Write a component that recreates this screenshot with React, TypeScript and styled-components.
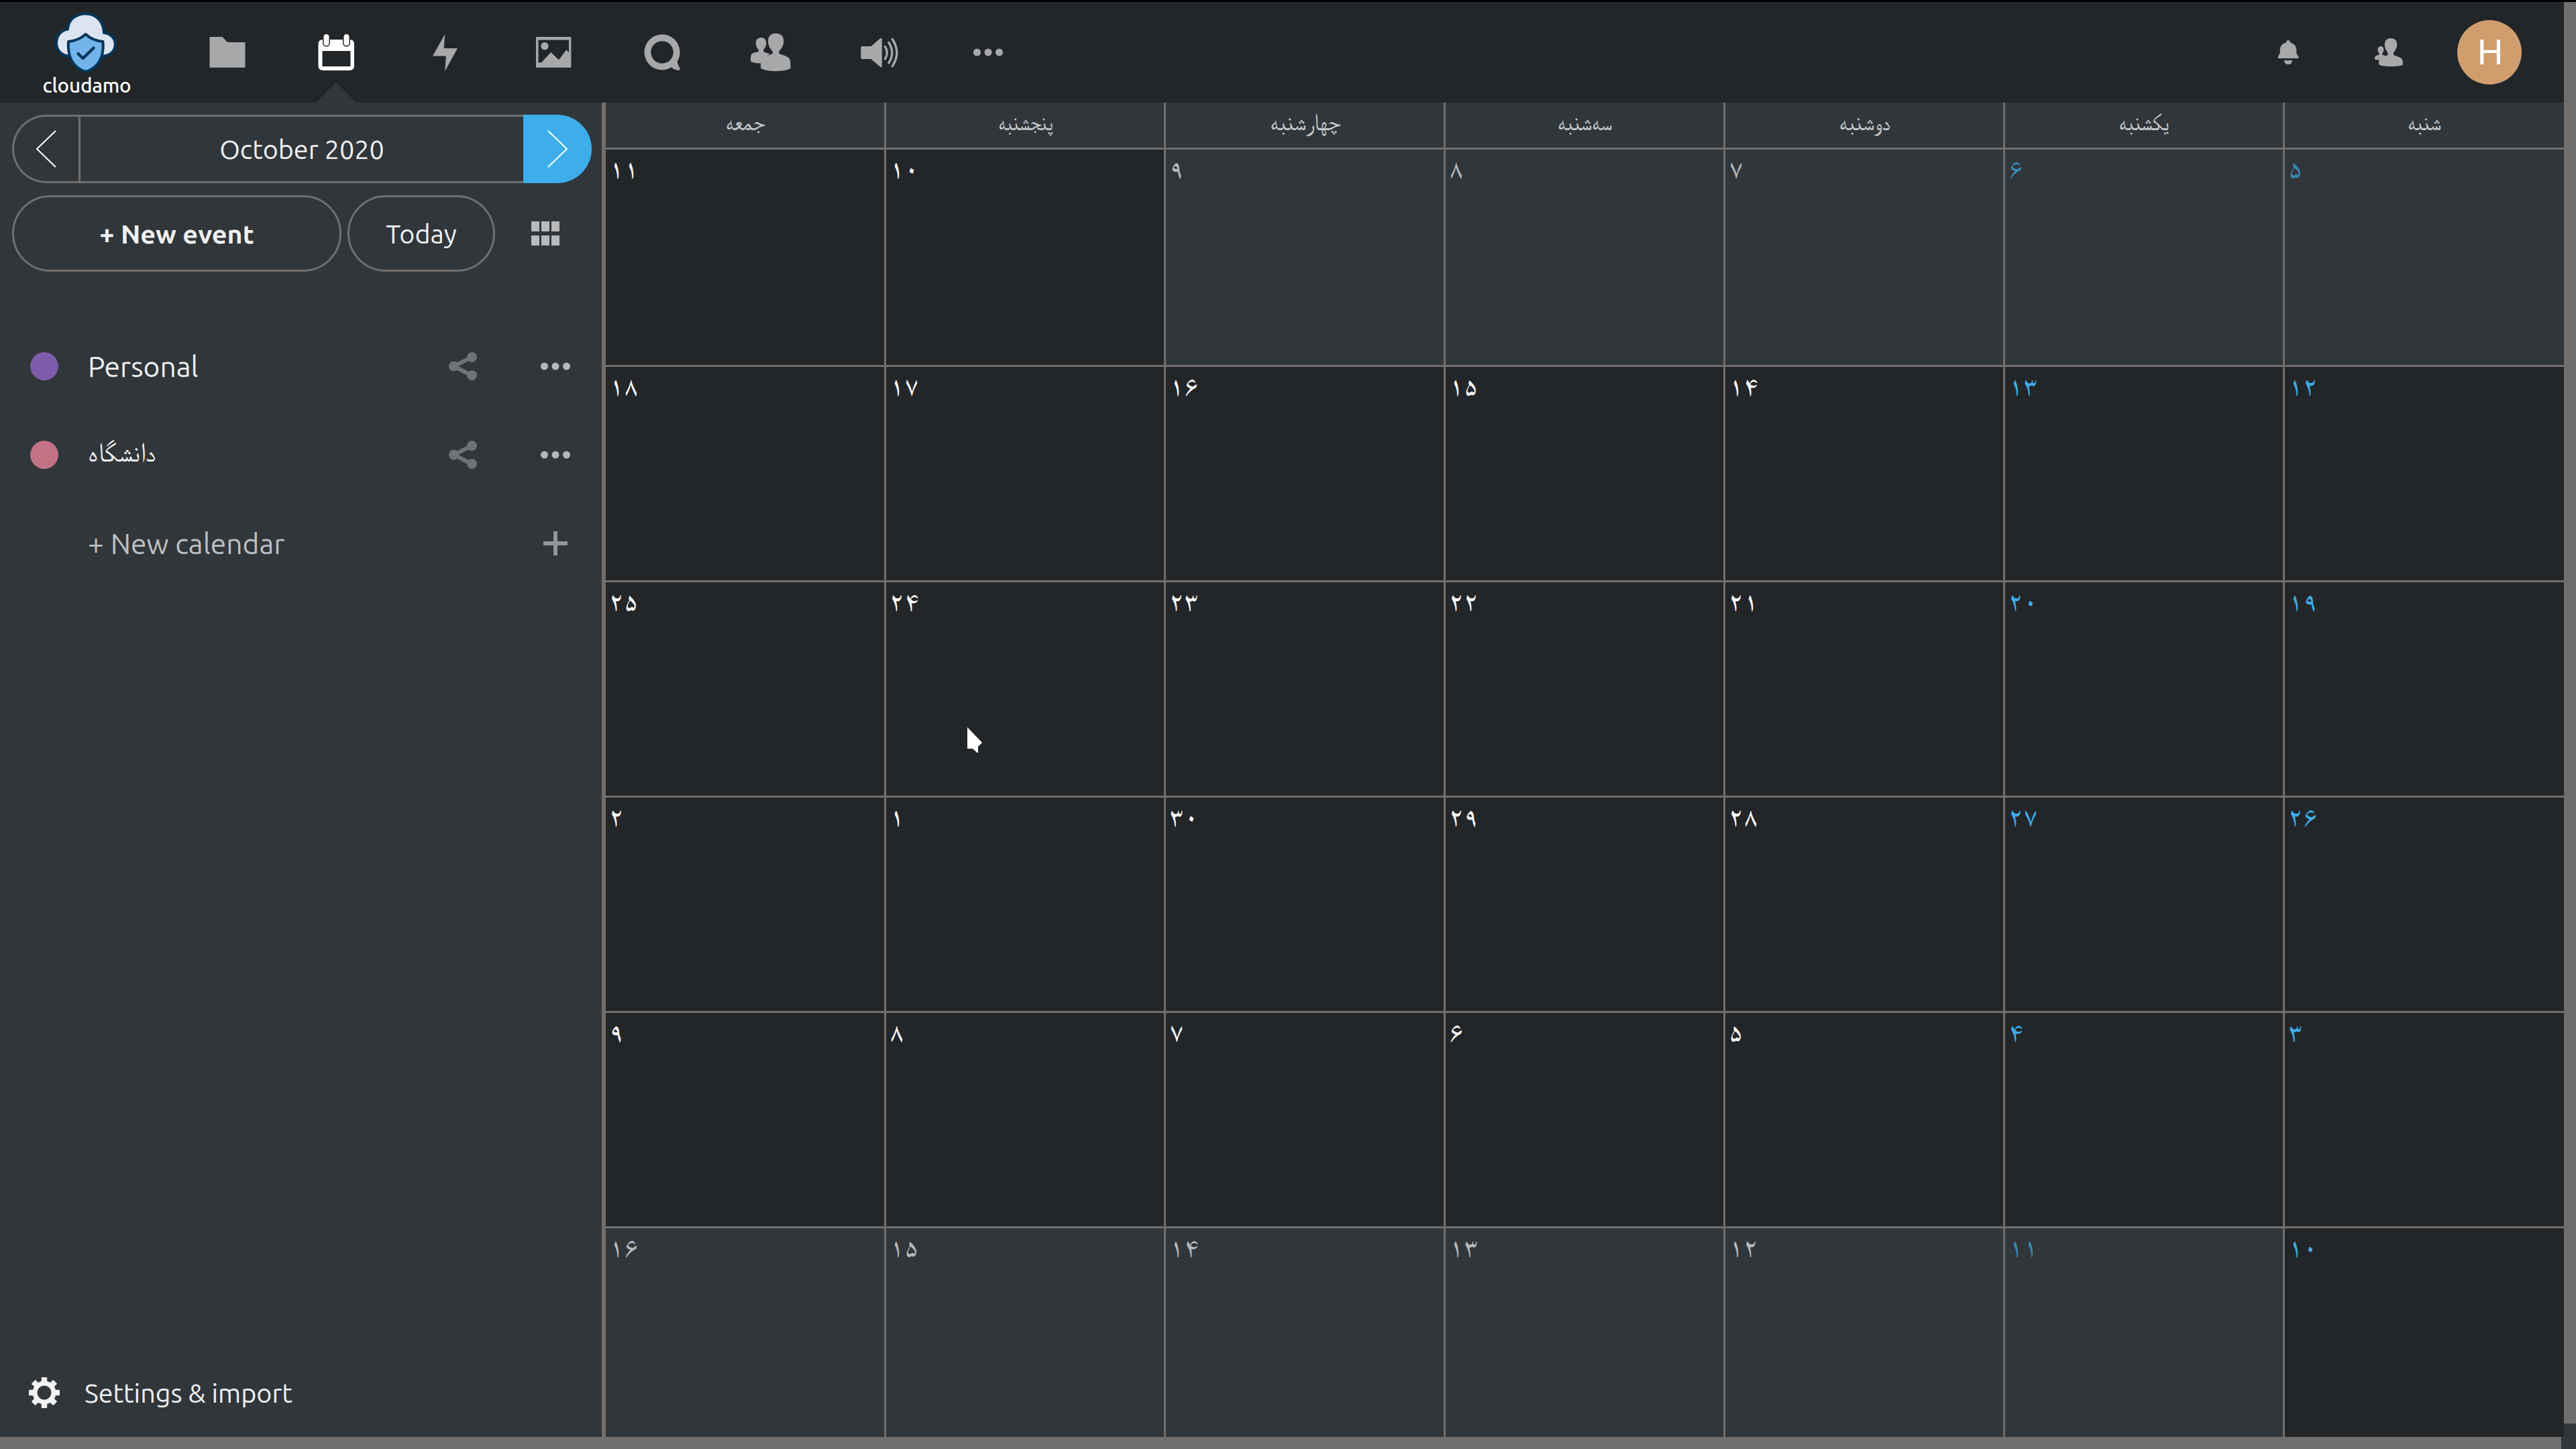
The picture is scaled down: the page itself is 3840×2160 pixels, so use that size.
import React from 'react';
import styled, { createGlobalStyle } from 'styled-components';

const latin = 'Ubuntu, "Noto Sans", sans-serif';
const naskh = 'FreeSerif, "DejaVu Sans", serif';
const digits = 'Amiri, FreeSerif, "DejaVu Sans", serif';

const c = {
  dark: '#232629',
  panel: '#31363a',
  line: '#716e6c',
  thumb: '#706f6d',
  icon: '#a7a8aa',
  text: '#eff0f1',
  blue: '#3daee9',
};

const GlobalStyle = createGlobalStyle`
  *, *::before, *::after { box-sizing: border-box; }
  body { margin: 0; background: ${c.dark}; overflow: hidden; }
  svg { display: block; flex: none; }
`;

const Page = styled.div`
  width: 3840px;
  height: 2160px;
  display: grid;
  grid-template-columns: 3818px 4px 18px;
  grid-template-rows: 3px 150px 1969px 20px 18px;
  background: ${c.dark};
  font-family: ${latin};
  color: ${c.text};
`;

const TopEdge = styled.div`
  grid-column: 1 / -1;
  background: #000;
`;

const Header = styled.header`
  grid-column: 1 / 3;
  grid-row: 2;
  display: flex;
  background: ${c.dark};
`;

const Logo = styled.div`
  width: 258px;
  padding-top: 12px;
  display: flex;
  flex-direction: column;
  align-items: center;
`;

const LogoName = styled.div`
  margin-top: -2px;
  padding-left: 1px;
  font-size: 29.7px;
  line-height: 34px;
  font-weight: 500;
  letter-spacing: -0.2px;
  color: #fff;
`;

const NavItem = styled.button<{ $active?: boolean; $width?: number }>`
  width: ${p => p.$width ?? 162}px;
  height: 150px;
  padding: 0;
  border: 0;
  background: none;
  color: ${p => (p.$active ? '#fff' : c.icon)};
  display: flex;
  align-items: center;
  justify-content: center;
  position: relative;

  &::after {
    content: '';
    display: ${p => (p.$active ? 'block' : 'none')};
    position: absolute;
    bottom: 0;
    left: 51px;
    border: 30px solid transparent;
    border-top-width: 0;
    border-bottom-color: ${c.panel};
  }
`;

const UserArea = styled.div`
  margin-left: auto;
  padding-right: 36px;
  display: flex;
`;

const Avatar = styled.div`
  width: 96px;
  height: 96px;
  padding-left: 2px;
  border-radius: 50%;
  background: #d09e6d;
  color: #fff;
  font: 52.8px/96px "Liberation Sans", Arial, sans-serif;
  text-align: center;
`;

const Main = styled.div`
  grid-column: 1 / 3;
  grid-row: 3 / 5;
  display: flex;
`;

const Sidebar = styled.aside`
  width: 903px;
  border-right: 6px solid ${c.line};
  background: ${c.panel};
  padding: 18px 15px 15px 18px;
  display: flex;
  flex-direction: column;
`;

const DatePicker = styled.div`
  height: 102px;
  display: flex;
`;

const button = `
  padding: 0;
  display: flex;
  align-items: center;
  justify-content: center;
  border: 3px solid ${c.line};
  background: transparent;
  color: ${c.text};
  font-family: ${latin};
  font-size: 39.5px;
`;

const Previous = styled.button`
  ${button}
  width: 99px;
  padding-right: 1px;
  border-right: 0;
  border-radius: 51px 0 0 51px;
`;

const Month = styled.button`
  ${button}
  flex: 1;
  border-right: 0;
`;

const Next = styled.button`
  ${button}
  width: 102px;
  border: 0;
  border-radius: 0 51px 51px 0;
  background: ${c.blue};
`;

const Actions = styled.div`
  margin: 18px 0 75px;
  height: 114px;
  display: flex;
  align-items: center;
  gap: 9px;
`;

const Pill = styled.button<{ $width: number; $bold?: boolean }>`
  ${button}
  width: ${p => p.$width}px;
  height: 114px;
  border-radius: 57px;
  font-weight: ${p => (p.$bold ? 700 : 400)};
`;

const ViewSwitch = styled.div`
  margin-left: 45px;
  display: grid;
  grid-template: 15px 15px / 12px 12px 12px;
  gap: 6px 3px;
`;

const ViewCell = styled.i`
  background: #b9babc;
`;

const Row = styled.div`
  height: 132px;
  padding-left: 27px;
  display: flex;
  align-items: center;
`;

const Bullet = styled.div<{ $color?: string }>`
  flex: none;
  width: 42px;
  height: 42px;
  margin-right: 44px;
  border-radius: 50%;
  background: ${p => p.$color ?? 'transparent'};
`;

const Label = styled.div<{ $muted?: boolean; $persian?: boolean }>`
  flex: none;
  width: 538px;
  font-family: ${p => (p.$persian ? naskh : latin)};
  font-size: ${p => (p.$persian ? 40.5 : 42.5)}px;
  line-height: 50px;
  padding: ${p => (p.$persian ? '0 0 5px 1px' : 0)};
  color: ${p => (p.$muted ? '#bdc0c2' : c.text)};
`;

const RowIcon = styled.div<{ $color: string; $width: number }>`
  flex: none;
  width: ${p => p.$width}px;
  color: ${p => p.$color};
  display: flex;
  justify-content: center;

  & + & {
    margin-left: 87px;
  }
`;

const Settings = styled.div`
  margin-top: auto;
  height: 102px;
  padding-left: 24px;
  display: flex;
  align-items: center;
  gap: 36px;
  font-size: 39.5px;
`;

const Calendar = styled.main`
  flex: 1;
  display: grid;
  grid-template-columns: 418px repeat(5, 417px) 416px;
  grid-template-rows: 70px 324px repeat(4, 321px) 311px;
`;

const Weekday = styled.div<{ $last: boolean }>`
  border-right: ${p => (p.$last ? 0 : 3)}px solid ${c.line};
  border-bottom: 3px solid ${c.line};
  background: ${c.panel};
  color: #c6c8ca;
  font: 36px/61px ${naskh};
  text-align: center;
  padding-left: 1px;
`;

const Squeeze = styled.span<{ $x: number }>`
  display: inline-block;
  transform: scaleX(${p => p.$x});
`;

const Day = styled.div<{ $other: boolean; $weekend: boolean; $right: boolean; $bottom: boolean }>`
  border-right: ${p => (p.$right ? 3 : 0)}px solid ${c.line};
  border-bottom: ${p => (p.$bottom ? 3 : 0)}px solid ${c.line};
  background: ${p => (p.$other ? c.panel : c.dark)};
  color: ${p => (p.$weekend ? (p.$other ? '#3989b6' : c.blue) : p.$other ? '#b7b9bb' : '#fcfcfc')};
  padding: 11px 5px;
  font: 37.5px/40px ${digits};
`;

const VerticalThumb = styled.div`
  grid-column: 3;
  grid-row: 2 / 4;
  background: ${c.thumb};
`;

const HorizontalThumb = styled.div`
  grid-column: 1;
  grid-row: 5;
  background: ${c.thumb};
`;

const Corner = styled.div<{ $col: string; $row: number }>`
  grid-column: ${p => p.$col};
  grid-row: ${p => p.$row};
  background: ${c.panel};
`;

const Pointer = styled.svg`
  position: absolute;
  left: 1436px;
  top: 1080px;
`;

const Icon = ({ children }: { children: React.ReactNode }) => (
  <svg width="60" height="60" viewBox="0 0 60 60" fill="currentColor">{children}</svg>
);

const Dots = () => (
  <Icon>
    <circle cx="13.5" cy="30" r="5.5" />
    <circle cx="30" cy="30" r="5.5" />
    <circle cx="46.5" cy="30" r="5.5" />
  </Icon>
);

const Share = () => (
  <svg width="42" height="42" viewBox="0 0 42 42" fill="currentColor">
    <path d="M34 7.5 7.5 21 34 34.5" fill="none" stroke="currentColor" strokeWidth="6" />
    <circle cx="7.5" cy="21" r="7.5" />
    <circle cx="34.5" cy="7.5" r="7.5" />
    <circle cx="34.5" cy="34.5" r="7.5" />
  </svg>
);

const CloudLogo = () => (
  <svg width="100" height="97" viewBox="0 0 100 97" strokeLinejoin="round" strokeLinecap="round">
    <path
      d="M24 68.500C12 68 5 59 5 49C5 38 12 30 22 28.500C23 14 34 5.500 48.700 5.500C64 5.500 75.500 17 76 34C86 35 92.800 42 92.800 51C92.800 61 85 68.500 74 68.500Z"
      fill="#dde4f1" stroke="#04365a" strokeWidth="4"
    />
    <path
      d="M48.700 36C55 42 64 46 74.500 47C76 67 70 85 48.700 92C28 85 21.500 67 23 47C33 46 42 42 48.700 36Z"
      fill="#72b4ea" stroke="#04365a" strokeWidth="4"
    />
    <path d="M37.500 65 44.700 72 60.500 56.500" fill="none" stroke="#04365a" strokeWidth="4.400" />
  </svg>
);

const FolderIcon = () => (
  <Icon><path d="M4.500 7H22.500L30 15H55.500Q56.500 15 56.500 16V51.700Q56.500 52.700 55.500 52.700H4.500Q3.500 52.700 3.500 51.700V8Q3.500 7 4.500 7Z" /></Icon>
);

const CalendarIcon = () => (
  <Icon>
    <path fillRule="evenodd" d="M10 11H50.500Q57 11 57 18V50Q57 57 50 57H10.500Q3.500 57 3.500 50V18Q3.500 11 10 11ZM9.500 28V51H51.500V28Z" />
    <rect x="10" y="1" width="11" height="20.500" rx="5.500" fill={c.dark} />
    <rect x="40" y="1" width="11" height="20.500" rx="5.500" fill={c.dark} />
    <rect x="11.500" y="3" width="8" height="17" rx="4" />
    <rect x="41.500" y="3" width="8" height="17" rx="4" />
  </Icon>
);

const BoltIcon = () => (
  <Icon><path d="M30.300 3 28.700 24H49L30.300 58 31.800 35.500H11.900Z" /></Icon>
);

const PhotoIcon = () => (
  <Icon>
    <path fillRule="evenodd" d="M5 7H55.400Q56.400 7 56.400 8V51.700Q56.400 52.700 55.400 52.700H5Q4 52.700 4 51.700V8Q4 7 5 7ZM7.500 11.500V45.300H12L26.300 30 38 41.300 49.300 26.300 53 30.500V11.500Z" />
    <circle cx="17" cy="20.700" r="5.700" />
  </Icon>
);

const TalkIcon = () => (
  <Icon>
    <path fillRule="evenodd" d="M30 3.300A26.500 26.500 0 0 1 52.500 43.800C53 49 57 53 56.600 55.800C55.500 58 48 56.500 44 52.300A26.500 26.500 0 1 1 30 3.300ZM30 13.200A16.700 16.700 0 1 0 30 46.600A16.700 16.700 0 1 0 30 13.200Z" />
  </Icon>
);

const PeopleIcon = () => (
  <Icon>
    <path d="M15.500 8C20.500 8 23.300 11.500 23.300 16.500C23.300 21 21.500 23.500 19 26.500V29C23 31 27 31.500 29 33C23 36 17 38 15.500 46.500C9 46.500 4 45.700 0 43.500C0 38 0 34 2 32C5 30 9 30 12 28.500V26.500C9.500 23.500 7.700 21 7.700 16.500C7.700 11.500 10.500 8 15.500 8Z" />
    <path d="M37.500 1.700C45 1.700 49.200 6 49.200 13.500C49 21 45.500 24.500 42.300 28.500V32C48 34.500 54 35 58 39.500C59.500 43 59.500 48 59.500 54C54 57 46 58 37.500 58C29 58 20 57 15 53.500C15 49 15 43 17 39.500C21 35 28 35 32.700 32V28.500C29 24.500 26 20 26 13.500C26 6 30 1.700 37.500 1.700Z" />
  </Icon>
);

const SpeakerIcon = () => (
  <Icon>
    <path d="M4 21H17.500L31.500 9Q33.700 8 33.700 10.500V50.500Q33.700 53 31.500 52L17.500 40H4Q2.300 40 2.300 38.500V22.500Q2.300 21 4 21Z" />
    <path d="M38.500 21.500Q44 30.500 38.500 39.700M44 15.500Q53.500 30.500 44 45.700M49.300 10.500Q62.500 30.500 49.300 50.700" fill="none" stroke="currentColor" strokeWidth="3.300" strokeLinecap="round" />
  </Icon>
);

const BellIcon = () => (
  <Icon>
    <path d="M30 12Q33 12 33.200 15.500C39 17 42.300 21 42.300 26.500C42.300 31 42 33 45.200 35.500V39H14.800V35.500C18 33 17.700 31 17.700 26.500C17.700 21 21 17 26.800 15.500Q27 12 30 12ZM23.800 42H36.200Q35.500 48 30 48Q24.500 48 23.800 42Z" />
  </Icon>
);

const ContactsIcon = () => (
  <Icon>
    <path d="M18 21C21 21 22.400 23.500 22.400 26C22.400 29 21.300 30.500 20 32V33.500C22 34.500 24 34.500 25 35.200C20 37 16.500 39 16 41.300C13 41.300 11 41.200 9 40.500C9 38 9 36.500 10.500 35.300C12 34.300 14.500 34 16 33V32C14.500 30.500 13.500 29 13.500 26C13.500 23.500 15 21 18 21Z" />
    <path d="M33 9C39 9 42.200 12.500 42.200 18C42.200 24 39.500 27 37 30.500V34C41 35.500 47 37 49.500 40C51 42 51 45 51 48.500C47 50.500 40 51 33 51C26 51 18.500 50.500 15 48C15 45 15 41.500 16.500 39.500C19 36 25 36 28.500 34V30.500C26 27 23.800 24 23.800 18C23.800 12.500 27 9 33 9Z" />
  </Icon>
);

const teeth = [0, 45, 90, 135, 180, 225, 270, 315];

const GearIcon = () => (
  <svg width="48" height="48" viewBox="-24 -24 48 48" fill="#f2f2f2">
    {teeth.map(a => <rect key={a} x="-4.200" y="-23" width="8.400" height="9" rx="1" transform={`rotate(${a})`} />)}
    <circle r="14" fill="none" stroke="#f2f2f2" strokeWidth="7" />
  </svg>
);

const apps = [FolderIcon, CalendarIcon, BoltIcon, PhotoIcon, TalkIcon, PeopleIcon, SpeakerIcon, Dots];

const calendars = [
  { name: 'Personal', color: '#7c5cab', persian: false },
  { name: 'دانشگاه', color: '#c37285', persian: true },
];

const weekdays = [
  { name: 'جمعه', x: 0.88 },
  { name: 'پنجشنبه', x: 0.83 },
  { name: 'چهارشنبه', x: 0.955 },
  { name: 'سه‌شنبه', x: 0.91 },
  { name: 'دوشنبه', x: 0.93 },
  { name: 'یکشنبه', x: 0.89 },
  { name: 'شنبه', x: 0.885 },
];

const weeks = [
  '۱۱ ۱۰ ۹ ۸ ۷ ۶ ۵',
  '۱۸ ۱۷ ۱۶ ۱۵ ۱۴ ۱۳ ۱۲',
  '۲۵ ۲۴ ۲۳ ۲۲ ۲۱ ۲۰ ۱۹',
  '۲ ۱ ۳۰ ۲۹ ۲۸ ۲۷ ۲۶',
  '۹ ۸ ۷ ۶ ۵ ۴ ۳',
  '۱۶ ۱۵ ۱۴ ۱۳ ۱۲ ۱۱ ۱۰',
].map(w => w.split(' '));

const isOtherMonth = (week: number, day: number) => (week === 0 && day > 1) || (week === 5 && day < 6);

export default function App() {
  return (
    <>
      <GlobalStyle />
      <Page>
        <TopEdge />
        <Header>
          <Logo>
            <CloudLogo />
            <LogoName>cloudamo</LogoName>
          </Logo>
          {apps.map((AppIcon, i) => (
            <NavItem key={i} $active={i === 1}><AppIcon /></NavItem>
          ))}
          <UserArea>
            <NavItem $width={150}><BellIcon /></NavItem>
            <NavItem $width={150}><ContactsIcon /></NavItem>
            <NavItem $width={150}><Avatar>H</Avatar></NavItem>
          </UserArea>
        </Header>
        <Main>
          <Sidebar>
            <DatePicker>
              <Previous>
                <svg width="32" height="58" viewBox="0 0 32 58" fill="none" stroke="#fff" strokeWidth="2">
                  <path d="M30 2 2 29 30 56" />
                </svg>
              </Previous>
              <Month>October 2020</Month>
              <Next>
                <svg width="32" height="58" viewBox="0 0 32 58" fill="none" stroke="#fff" strokeWidth="2">
                  <path d="M2 2 30 29 2 56" />
                </svg>
              </Next>
            </DatePicker>
            <Actions>
              <Pill $width={491} $bold>+ New event</Pill>
              <Pill $width={220}>Today</Pill>
              <ViewSwitch>
                {[0, 1, 2, 3, 4, 5].map(i => <ViewCell key={i} />)}
              </ViewSwitch>
            </Actions>
            {calendars.map(cal => (
              <Row key={cal.name}>
                <Bullet $color={cal.color} />
                <Label $persian={cal.persian}>{cal.name}</Label>
                <RowIcon $width={42} $color="#6f7277"><Share /></RowIcon>
                <RowIcon $width={60} $color="#b6b7b9"><Dots /></RowIcon>
              </Row>
            ))}
            <Row>
              <Bullet />
              <Label $muted>+ New calendar</Label>
              <RowIcon $width={42} $color="transparent" />
              <RowIcon $width={60} $color="#949799">
                <svg width="36" height="36" viewBox="0 0 36 36" fill="currentColor"><path d="M15 0H21V15H36V21H21V36H15V21H0V15H15Z" /></svg>
              </RowIcon>
            </Row>
            <Settings>
              <GearIcon />
              Settings &amp; import
            </Settings>
          </Sidebar>
          <Calendar>
            {weekdays.map((day, i) => (
              <Weekday key={day.name} $last={i === 6}>
                <Squeeze $x={day.x}>{day.name}</Squeeze>
              </Weekday>
            ))}
            {weeks.map((week, w) =>
              week.map((day, d) => (
                <Day
                  key={`${w}-${d}`}
                  $other={isOtherMonth(w, d)}
                  $weekend={d > 4}
                  $right={d < 6}
                  $bottom={w < 5}
                >
                  {day}
                </Day>
              )),
            )}
          </Calendar>
        </Main>
        <VerticalThumb />
        <HorizontalThumb />
        <Corner $col="3" $row={4} />
        <Corner $col="2 / 4" $row={5} />
      </Page>
      <Pointer width="40" height="50" viewBox="0 0 40 50">
        <path d="M6 4V36H14L20.500 42H22V33L28 27Z" fill="#fff" />
      </Pointer>
    </>
  );
}
